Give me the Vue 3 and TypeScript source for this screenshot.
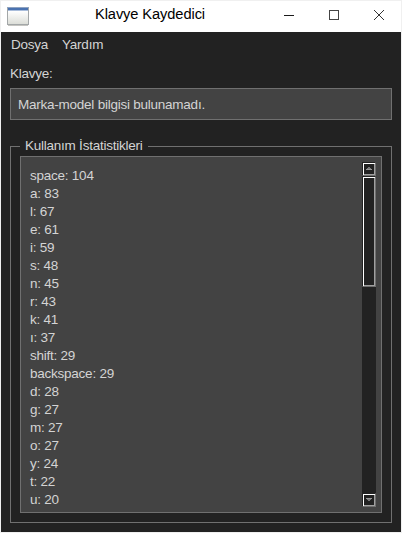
<script setup lang="ts">
interface KeyStat {
  key: string
  count: number
}

const menus: string[] = ['Dosya', 'Yardım']

const stats: KeyStat[] = [
  { key: 'space', count: 104 },
  { key: 'a', count: 83 },
  { key: 'l', count: 67 },
  { key: 'e', count: 61 },
  { key: 'i', count: 59 },
  { key: 's', count: 48 },
  { key: 'n', count: 45 },
  { key: 'r', count: 43 },
  { key: 'k', count: 41 },
  { key: 'ı', count: 37 },
  { key: 'shift', count: 29 },
  { key: 'backspace', count: 29 },
  { key: 'd', count: 28 },
  { key: 'g', count: 27 },
  { key: 'm', count: 27 },
  { key: 'o', count: 27 },
  { key: 'y', count: 24 },
  { key: 't', count: 22 },
  { key: 'u', count: 20 },
]
</script>

<template>
  <div class="window">
    <header class="titlebar">
      <svg class="app-icon" width="22" height="19" viewBox="0 0 22 19" shape-rendering="crispEdges">
        <defs>
          <linearGradient id="pane" x1="0" y1="0" x2="0" y2="1">
            <stop offset="0" stop-color="#ffffff" />
            <stop offset="1" stop-color="#dcded8" />
          </linearGradient>
        </defs>
        <rect width="22" height="18" fill="#a3a7a8" />
        <rect x="1" y="18" width="20" height="1" fill="#c4c4c0" />
        <rect width="22" height="1" fill="#8fa3c0" />
        <rect x="1" y="1" width="20" height="2" fill="#4a72b0" />
        <rect x="1" y="3" width="20" height="1" fill="#a9bddb" />
        <rect x="1" y="4" width="20" height="13" fill="url(#pane)" />
      </svg>
      <h1 class="title">Klavye Kaydedici</h1>
      <div class="controls">
        <button class="control" aria-label="Küçült">
          <svg width="10" height="10" shape-rendering="crispEdges"><path d="M0 5.5H10" stroke="#1a1a1a" /></svg>
        </button>
        <button class="control" aria-label="Büyüt">
          <svg width="10" height="10" shape-rendering="crispEdges"><rect x=".5" y=".5" width="9" height="9" fill="none" stroke="#444" /></svg>
        </button>
        <button class="control" aria-label="Kapat">
          <svg width="10" height="10"><path d="M0 0L10 10M10 0L0 10" stroke="#333" /></svg>
        </button>
      </div>
    </header>

    <nav class="menubar">
      <span v-for="menu in menus" :key="menu">{{ menu }}</span>
    </nav>

    <main class="content">
      <div class="label">Klavye:</div>
      <div class="device">Marka-model bilgisi bulunamadı.</div>

      <section class="group">
        <h2 class="legend"><span>Kullanım İstatistikleri</span></h2>
        <div class="list">
          <ul class="rows">
            <li v-for="stat in stats" :key="stat.key">{{ stat.key }}: {{ stat.count }}</li>
          </ul>
          <div class="scrollbar">
            <div class="bevel arrow">
              <svg width="6" height="4" shape-rendering="crispEdges">
                <path d="M2 0H4V1H5V2H6V3H0V2H1V1H2Z" fill="#777" />
                <path d="M0 2H6V3H0Z" fill="#999" />
              </svg>
            </div>
            <div class="bevel thumb"></div>
            <div class="track"></div>
            <div class="bevel arrow">
              <svg width="6" height="4" shape-rendering="crispEdges">
                <path d="M0 0H6V1H5V2H4V3H2V2H1V1H0Z" fill="#777" />
                <path d="M0 0H6V1H0Z" fill="#999" />
              </svg>
            </div>
          </div>
        </div>
      </section>
    </main>
  </div>
</template>

<style>
body {
  background: #f0f0f0;
}
</style>

<style scoped>
.window {
  box-sizing: border-box;
  display: flex;
  flex-direction: column;
  width: 402px;
  height: 533px;
  border: 1px solid #f0f0f0;
  background: #222;
  color: #d4d4d4;
  font: 13.5px/18px "Liberation Sans", Arial, sans-serif;
  letter-spacing: -0.24px;
  overflow: hidden;
}

.titlebar {
  display: flex;
  align-items: flex-start;
  flex: none;
  height: 31px;
  background: #fff;
  color: #000;
}

.app-icon {
  margin: 6px 0 0 6px;
}

.title {
  margin: 4px 0 0 66px;
  font-size: 14.67px;
  font-weight: 400;
  line-height: 18px;
  letter-spacing: -0.1px;
  white-space: nowrap;
}

.controls {
  display: flex;
  margin-left: auto;
}

.control {
  display: flex;
  align-items: flex-start;
  justify-content: center;
  width: 45px;
  height: 31px;
  padding: 9px 0 0;
  border: 0;
  background: none;
}

.menubar {
  display: flex;
  flex: none;
  gap: 14px;
  height: 22px;
  padding: 4px 10px 0;
}

.content {
  display: flex;
  flex-direction: column;
  flex: 1;
  min-height: 0;
  padding: 7px 9px 9px;
}

.label {
  height: 22px;
}

.device {
  box-sizing: border-box;
  flex: none;
  height: 32px;
  margin-top: 4px;
  padding: 7px 7px 5px;
  border: 1px solid #707070;
  background: #434343;
}

.group {
  box-sizing: border-box;
  display: flex;
  flex-direction: column;
  height: 377px;
  margin-top: 26px;
  padding: 0 9px 9px;
  border: 1px solid #707070;
}

.legend {
  flex: none;
  height: 9px;
  margin: 0;
  font-size: inherit;
  font-weight: 400;
}

.legend span {
  display: block;
  width: max-content;
  margin-top: -10px;
  padding: 0 5px;
  background: #222;
}

.list {
  box-sizing: border-box;
  display: flex;
  justify-content: space-between;
  height: 357px;
  padding: 5px;
  border: 1px solid #707070;
  background: #434343;
}

.rows {
  margin: 0;
  padding: 5px 0 0 4px;
  list-style: none;
}

.rows li {
  height: 18px;
}

.scrollbar {
  display: flex;
  flex-direction: column;
  width: 14px;
  background: #222;
}

.bevel {
  box-sizing: border-box;
  border: 1px solid;
  border-color: #222 #707070 #707070 #222;
  box-shadow: inset 1px 1px #fff, inset -1px -1px #a0a0a0;
}

.arrow {
  display: flex;
  align-items: center;
  justify-content: center;
  flex: none;
  height: 14px;
}

.thumb {
  flex: none;
  height: 111px;
}

.track {
  flex: 1;
}
</style>
